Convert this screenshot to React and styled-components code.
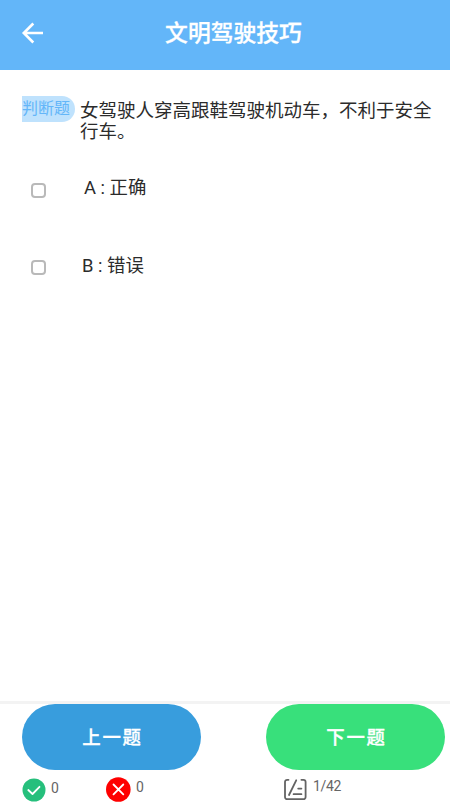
import React from "react";
import styled, { createGlobalStyle } from "styled-components";

const GlobalStyle = createGlobalStyle`
  * {
    box-sizing: border-box;
  }
  body {
    margin: 0;
    background: #fff;
    color: #2b2b2b;
    font-family: Roboto, "Noto Sans CJK SC", sans-serif;
  }
`;

const Page = styled.div`
  display: flex;
  flex-direction: column;
  height: 807px;
  width: 450px;
  overflow: hidden;
`;

const Header = styled.header`
  display: grid;
  grid-template-columns: 67px 1fr 50px;
  align-items: center;
  height: 69.5px;
  padding-bottom: 4px;
  background: #63b6f9;
  color: #fff;
`;

const BackButton = styled.button`
  display: flex;
  width: 24px;
  margin-left: 21px;
  padding: 0;
  border: 0;
  background: none;
  color: inherit;
`;

const Title = styled.h1`
  margin: 3px 0 0;
  font-size: 22.8px;
  font-weight: 500;
  line-height: 30px;
  text-align: center;
  -webkit-text-stroke: 0.3px #fff;
`;

const Main = styled.main`
  flex: 1;
  padding: 26px 16px 0 22px;
`;

const Question = styled.div`
  display: flex;
  align-items: flex-start;
`;

const Tag = styled.span`
  flex: none;
  width: 53px;
  height: 26.5px;
  margin-right: 5px;
  border-radius: 0 13px 13px 0;
  background: #bfe2fd;
  color: #63b6f9;
  font-size: 16px;
  line-height: 26px;
  white-space: nowrap;
`;

const QuestionText = styled.p`
  margin: 5px 0 0;
  font-size: 18.5px;
  line-height: 21.5px;
`;

const Options = styled.div`
  display: flex;
  flex-direction: column;
  gap: 47.5px;
  margin-top: 29px;
`;

const Option = styled.label`
  display: flex;
  align-items: center;
  height: 30px;
  padding-left: 9px;
`;

const Checkbox = styled.input`
  appearance: none;
  width: 15px;
  height: 15px;
  margin: 5px 0 0;
  border: 2px solid #b9b9b9;
  border-radius: 4px;
  background: #fff;
`;

const OptionText = styled.span`
  margin: 1px 0 0 ${(props) => props.$gap}px;
  font-size: 18.4px;
  line-height: 28px;
`;

const Footer = styled.footer`
  height: 106px;
  border-top: 3px solid #f3f3f3;
`;

const Buttons = styled.div`
  display: flex;
  justify-content: space-between;
  padding: 0 5px 0 22px;
`;

const NavButton = styled.button`
  width: 179px;
  height: 66px;
  padding: 0 0 2px 2px;
  border: 0;
  border-radius: 33px;
  background: ${(props) => props.$color};
  color: #fff;
  font-family: inherit;
  font-size: 18.4px;
  font-weight: 500;
  letter-spacing: 1.8px;
  -webkit-text-stroke: 0.3px #fff;
`;

const Stats = styled.div`
  display: grid;
  grid-template-columns: 84px 177px 1fr;
  padding-left: 22px;
`;

const Stat = styled.div`
  display: flex;
  align-items: flex-start;
  color: #666;
  font-size: 14px;
  line-height: 16px;

  svg {
    flex: none;
    margin-top: ${(props) => props.$iconTop}px;
  }
  span {
    margin: ${(props) => props.$textTop}px 0 0 ${(props) => props.$gap}px;
    letter-spacing: -0.3px;
  }
`;

const ArrowIcon = () => (
  <svg width="24" height="24" viewBox="0 0 24 24" fill="none">
    <path
      d="M12.3 2.5 2.8 12l9.5 9.5M2.8 12H22"
      stroke="currentColor"
      strokeWidth="2.6"
    />
  </svg>
);

const CorrectIcon = () => (
  <svg width="24" height="24" viewBox="0 0 24 24" fill="none">
    <circle cx="12" cy="12" r="11.5" fill="#26bf7c" />
    <path
      d="m6.3 12 4.2 4 7-7.2"
      stroke="#fff"
      strokeWidth="1.8"
      strokeLinecap="round"
      strokeLinejoin="round"
    />
  </svg>
);

const WrongIcon = () => (
  <svg width="25" height="25" viewBox="0 0 25 25" fill="none">
    <circle cx="12.3" cy="12.5" r="12.3" fill="#fe0000" />
    <path
      d="m7.5 7.5 9.8 9.8m0-9.8-9.8 9.8"
      stroke="#fff"
      strokeWidth="1.8"
      strokeLinecap="round"
    />
  </svg>
);

const SheetIcon = () => (
  <svg width="24" height="24" viewBox="0 0 24 24" fill="none">
    <path
      d="M5.5 1.8H4.2A2.2 2.2 0 0 0 2 4v15a2.2 2.2 0 0 0 2.2 2.2h16.2a2.2 2.2 0 0 0 2.2-2.2V4a2.2 2.2 0 0 0-2.2-2.2h-2M13.2 2.3 6 17M15.2 10.6h3.2M10.6 16.2h7.8"
      stroke="#636363"
      strokeWidth="1.8"
      strokeLinecap="round"
    />
  </svg>
);

const options = [
  { id: "A", text: "正确", gap: 38 },
  { id: "B", text: "错误", gap: 36 },
];

const App = () => {
  return (
    <Page>
      <GlobalStyle />
      <Header>
        <BackButton aria-label="返回">
          <ArrowIcon />
        </BackButton>
        <Title>文明驾驶技巧</Title>
      </Header>
      <Main>
        <Question>
          <Tag>判断题</Tag>
          <QuestionText>
            女驾驶人穿高跟鞋驾驶机动车，不利于安全行车。
          </QuestionText>
        </Question>
        <Options>
          {options.map((option) => (
            <Option key={option.id}>
              <Checkbox type="checkbox" />
              <OptionText $gap={option.gap}>
                {option.id} : {option.text}
              </OptionText>
            </Option>
          ))}
        </Options>
      </Main>
      <Footer>
        <Buttons>
          <NavButton $color="#389ddd">上一题</NavButton>
          <NavButton $color="#38e07b">下一题</NavButton>
        </Buttons>
        <Stats>
          <Stat $iconTop={8} $textTop={10} $gap={5}>
            <CorrectIcon />
            <span>0</span>
          </Stat>
          <Stat $iconTop={7} $textTop={9} $gap={5}>
            <WrongIcon />
            <span>0</span>
          </Stat>
          <Stat $iconTop={8} $textTop={8} $gap={6}>
            <SheetIcon />
            <span>1/42</span>
          </Stat>
        </Stats>
      </Footer>
    </Page>
  );
};

export default App;
